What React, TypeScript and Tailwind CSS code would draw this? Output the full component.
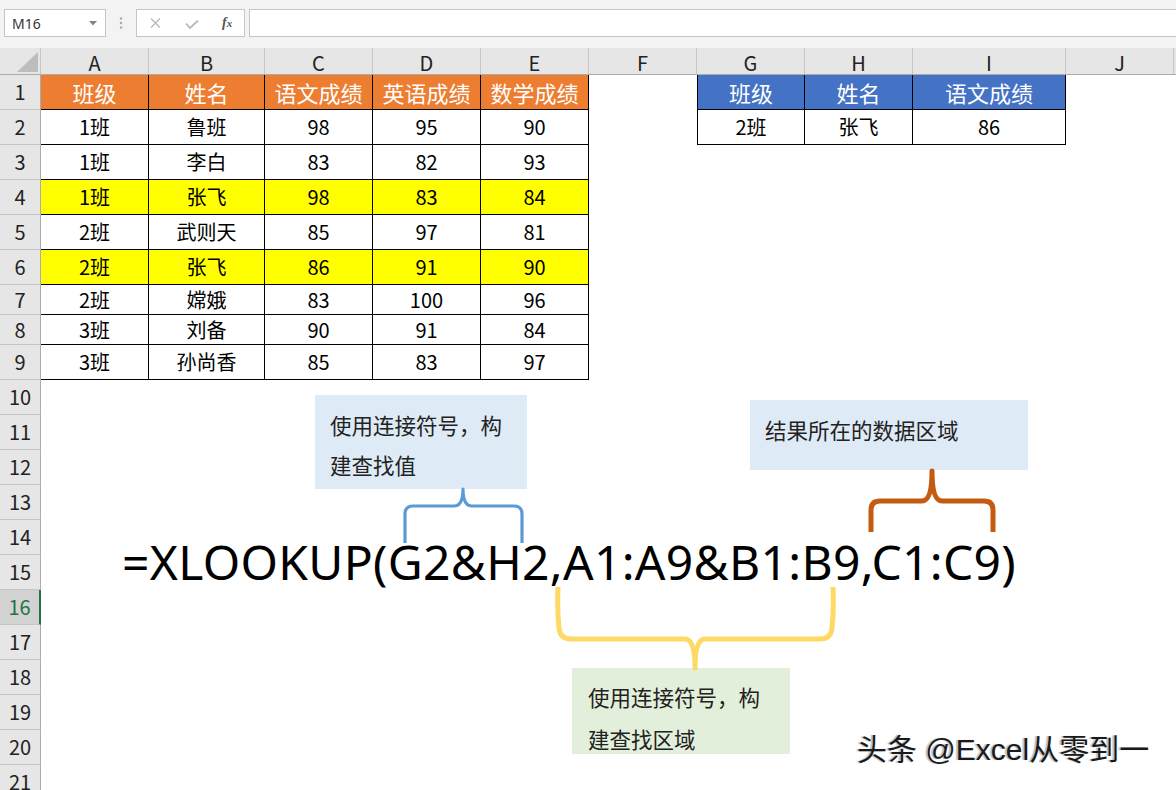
import React from 'react';

const COLS = ['A', 'B', 'C', 'D', 'E', 'F', 'G', 'H', 'I', 'J'];

const LEFT: string[][] = [
  ['班级', '姓名', '语文成绩', '英语成绩', '数学成绩'],
  ['1班', '鲁班', '98', '95', '90'],
  ['1班', '李白', '83', '82', '93'],
  ['1班', '张飞', '98', '83', '84'],
  ['2班', '武则天', '85', '97', '81'],
  ['2班', '张飞', '86', '91', '90'],
  ['2班', '嫦娥', '83', '100', '96'],
  ['3班', '刘备', '90', '91', '84'],
  ['3班', '孙尚香', '85', '83', '97'],
];

const RIGHT: string[][] = [
  ['班级', '姓名', '语文成绩'],
  ['2班', '张飞', '86'],
];

function Toolbar() {
  return (
    <div className="flex h-[48px] items-start bg-[#f3f3f3] pl-[4px] pt-[9px]">
      <div className="flex h-[28px] w-[102px] items-center justify-between border border-[#c6c6c6] bg-white pl-[7px] pr-[8px] font-['Noto_Sans',sans-serif] text-[14px] text-[#333]">
        <span>M16</span>
        <svg width="8" height="5" viewBox="0 0 8 5">
          <path d="M0 0 L8 0 L4 4.5 Z" fill="#858585" />
        </svg>
      </div>
      <div className="flex h-[28px] w-[30px] items-center justify-center">
        <svg width="4" height="12" viewBox="0 0 4 12">
          <circle cx="2" cy="1.5" r="1.2" fill="#a8a8a8" />
          <circle cx="2" cy="6" r="1.2" fill="#a8a8a8" />
          <circle cx="2" cy="10.5" r="1.2" fill="#a8a8a8" />
        </svg>
      </div>
      <div className="flex h-[28px] w-[109px] items-center border border-[#c6c6c6] bg-white pl-[13px]">
        <svg width="11" height="10" viewBox="0 0 11 10">
          <path d="M1 0.5 L10 9.5 M10 0.5 L1 9.5" stroke="#b8b8b8" strokeWidth="1.3" />
        </svg>
        <svg className="ml-[24px] mt-[3px]" width="14" height="9" viewBox="0 0 14 9">
          <path d="M1 3.5 L5 8 L13 0.5" stroke="#b8b8b8" strokeWidth="1.8" fill="none" />
        </svg>
        <span className="ml-[23px] font-['Liberation_Serif',serif] text-[14px] font-bold italic leading-none text-[#555]">
          f<span className="text-[11px]">x</span>
        </span>
      </div>
      <div className="ml-[4px] h-[28px] flex-1 border border-r-0 border-[#c6c6c6] bg-white" />
    </div>
  );
}

function Sheet() {
  const cells: React.ReactNode[] = [];

  cells.push(
    <div key="corner" className="flex items-end justify-end border-b border-r border-b-[#ababab] border-r-[#c6c6c6] bg-[#e6e6e6] pb-[2px] pr-[2px]">
      <svg width="21" height="20" viewBox="0 0 21 20">
        <path d="M21 0 L21 20 L0 20 Z" fill="#bdbdbd" />
      </svg>
    </div>
  );
  COLS.forEach((c) => {
    cells.push(
      <div
        key={'h' + c}
        className="flex items-center justify-center border-b border-r border-b-[#ababab] border-r-[#c6c6c6] bg-[#e6e6e6] pt-[3px] text-[20px] text-[#222]"
      >
        {c}
      </div>
    );
  });
  cells.push(<div key="hx" className="border-b border-b-[#ababab] bg-[#e6e6e6]" />);

  for (let r = 1; r <= 21; r++) {
    const selected = r === 16;
    cells.push(
      <div
        key={'r' + r}
        className={
          selected
            ? 'flex items-center justify-center border-b border-r-2 border-b-[#c6c6c6] border-r-[#217346] bg-[#d2d2d2] text-[20px] text-[#217346]'
            : 'flex items-center justify-center border-b border-r border-b-[#c6c6c6] border-r-[#ababab] bg-[#e6e6e6] text-[20px] text-[#222]'
        }
      >
        {r}
      </div>
    );
    for (let ci = 0; ci < 11; ci++) {
      const key = 'c' + r + '-' + ci;
      if (r <= 9 && ci <= 4) {
        const val = LEFT[r - 1][ci];
        let bg = 'bg-white text-black text-[20px]';
        if (r === 1) bg = 'bg-[#ed7d31] text-white text-[22px]';
        else if (r === 4 || r === 6) bg = 'bg-[#ffff00] text-black text-[20px]';
        cells.push(
          <div key={key} className={'flex items-center justify-center border-b border-r border-black ' + bg}>
            {val}
          </div>
        );
      } else if (r <= 2 && ci >= 6 && ci <= 8) {
        const val = RIGHT[r - 1][ci - 6];
        const bg = r === 1 ? 'bg-[#4472c4] text-white text-[22px]' : 'bg-white text-black text-[20px]';
        cells.push(
          <div
            key={key}
            className={
              'flex items-center justify-center border-b border-r border-black ' +
              (ci === 6 ? 'border-l ' : '') +
              bg
            }
          >
            {val}
          </div>
        );
      } else {
        cells.push(<div key={key} className="bg-white" />);
      }
    }
  }

  return (
    <div className="grid grid-cols-[41px_108px_116px_108px_108px_108px_108px_108px_108px_153px_108px_1fr] grid-rows-[27px_repeat(6,35px)_30px_30px_repeat(13,35px)]">
      {cells}
    </div>
  );
}

function Braces() {
  return (
    <svg className="pointer-events-none absolute left-0 top-0" width="1176" height="790" viewBox="0 0 1176 790">
      <path
        d="M405 543 L405 514 Q405 506 413 506 L454 506 Q463 506 463 489 Q463 506 472 506 L514 506 Q522 506 522 514 L522 543"
        fill="none"
        stroke="#5b9bd5"
        strokeWidth="3.2"
        strokeLinejoin="round"
      />
      <path
        d="M871 532 L871 510 Q871 501 880 501 L922 501 Q932 501 932 471 Q932 501 942 501 L984 501 Q993 501 993 510 L993 532"
        fill="none"
        stroke="#c55a11"
        strokeWidth="5"
        strokeLinejoin="round"
      />
      <path
        d="M558 587 Q557 610 559 628 Q560 639 571 639 L685 639 Q695 639 695 668 Q695 639 705 639 L820 639 Q831 639 832 628 Q834 610 833 587"
        fill="none"
        stroke="#ffd966"
        strokeWidth="5"
        strokeLinejoin="round"
      />
    </svg>
  );
}

export default function App() {
  return (
    <div className="relative h-[790px] w-[1176px] overflow-hidden bg-white font-['Noto_Sans_CJK_SC','Noto_Sans',sans-serif]">
      <Toolbar />
      <Sheet />

      <div className="absolute left-[315px] top-[395px] h-[94px] w-[212px] bg-[#deeaf6] pl-[15px] pt-[10px] text-[21.5px] leading-[40px] text-[#222]">
        <div>使用连接符号，构</div>
        <div>建查找值</div>
      </div>

      <div className="absolute left-[750px] top-[400px] h-[70px] w-[278px] bg-[#deeaf6] pl-[15px] pt-[10px] text-[21.5px] leading-[40px] text-[#222]">
        <div>结果所在的数据区域</div>
      </div>

      <div className="absolute left-[572px] top-[668px] h-[86px] w-[218px] bg-[#e2efda] pl-[16px] pt-[8px] text-[21.5px] leading-[42px] text-[#222]">
        <div>使用连接符号，构</div>
        <div>建查找区域</div>
      </div>

      <Braces />

      <div className="absolute left-[122px] top-[538px] whitespace-nowrap font-['Noto_Sans',sans-serif] text-[48px] leading-[48px] tracking-[0.3px] text-black">
        =XLOOKUP(G2&amp;H2,A1:A9&amp;B1:B9,C1:C9)
      </div>

      <div className="absolute left-[857px] top-[732px] whitespace-nowrap font-['Liberation_Sans','Noto_Sans_CJK_SC',sans-serif] text-[30px] leading-[36px] text-[#1a1a1a] [text-shadow:-2px_0_1px_rgba(0,0,0,0.25)]">
        头条 @Excel从零到一
      </div>
    </div>
  );
}
